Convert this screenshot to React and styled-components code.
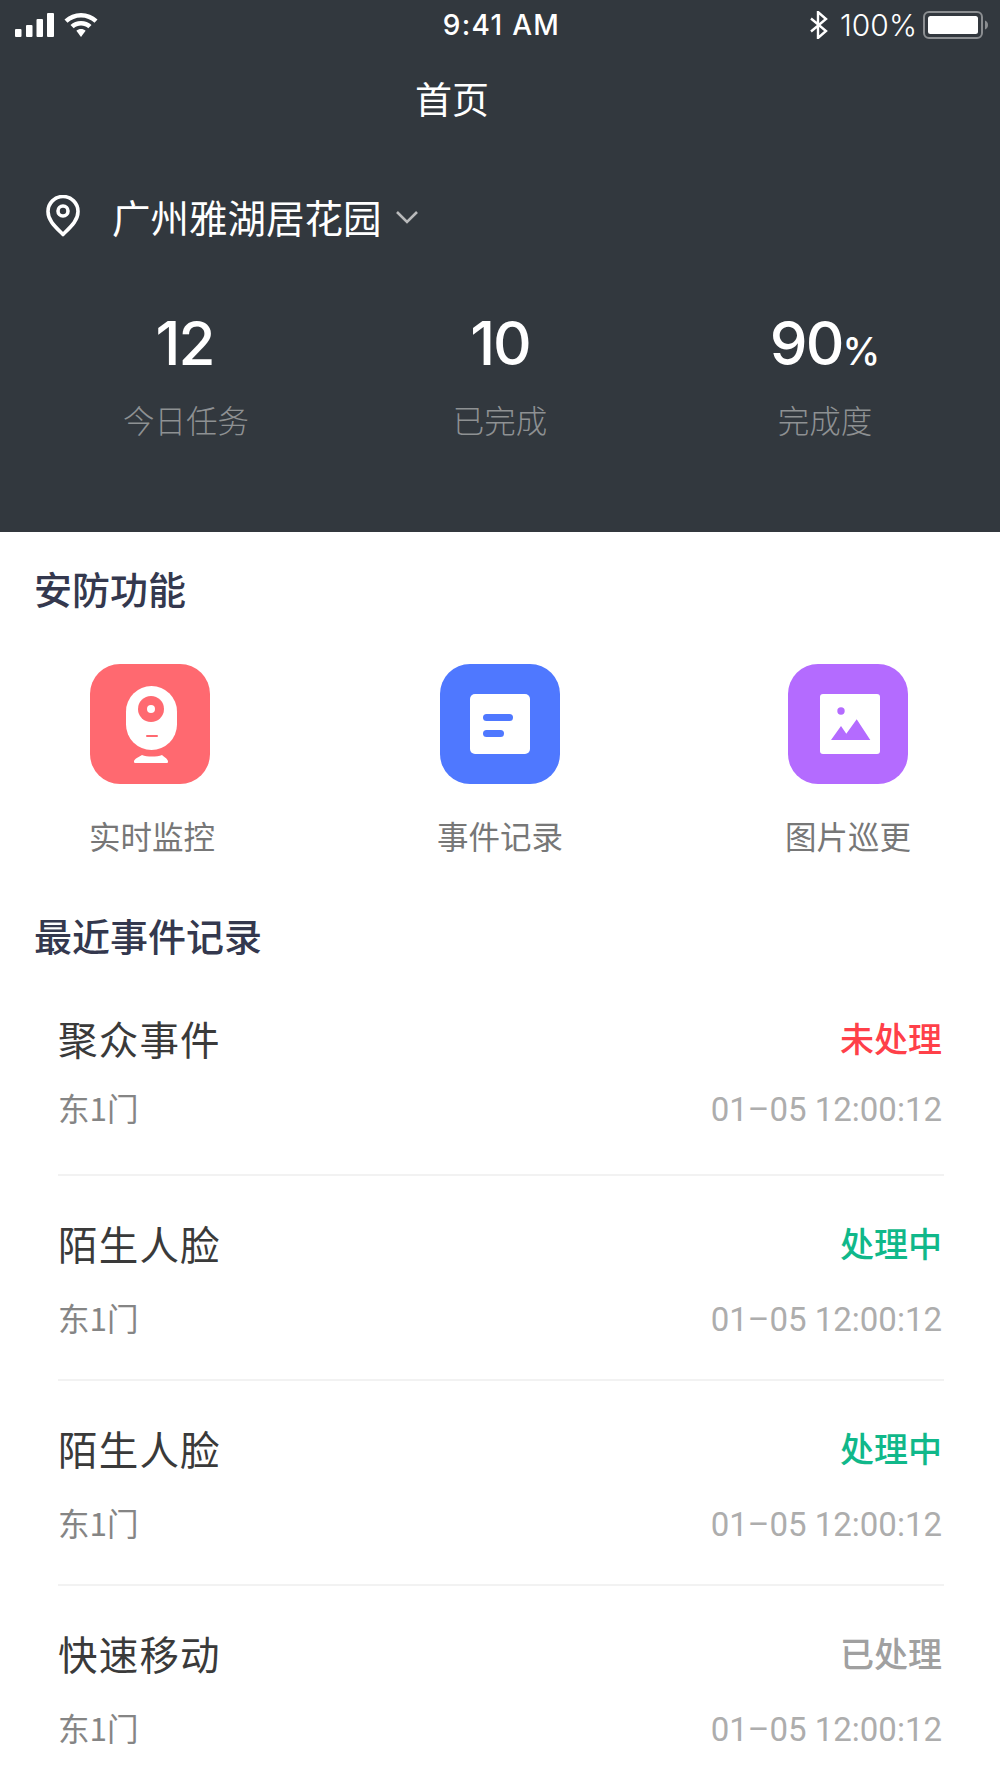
import React from "react";
import styled, { createGlobalStyle } from "styled-components";

const Global = createGlobalStyle`
  html, body { margin: 0; padding: 0; background: #fff; }
  * { box-sizing: border-box; }
  body { font-family: "Noto Sans CJK SC", "Noto Sans", sans-serif; }
`;
const Page = styled.div`width: 1000px; height: 1778px; overflow: hidden; background: #fff;`;
const Header = styled.header`height: 532px; background: #32383e; color: #fff; overflow: hidden;`;
const StatusBar = styled.div`height: 50px; display: grid; grid-template-columns: 1fr auto 1fr; align-items: center; padding: 0 9px 0 15px;`;
const StatusLeft = styled.div`display: flex; align-items: center; gap: 10px;`;
const StatusRight = styled.div`display: flex; align-items: center; justify-content: flex-end; gap: 12px;`;
const Time = styled.div`font: 500 28px/50px Inter, sans-serif; letter-spacing: 1.3px; margin-left: -3px;`;
const Percent = styled.div`font: 300 30px/50px Inter, sans-serif; margin-right: -6px;`;
const NavTitle = styled.h1`margin: 23px 0 0; padding-right: 96px; height: 50px; text-align: center; font-weight: 400; font-size: 37px; line-height: 50px;`;
const Location = styled.div`display: flex; align-items: center; height: 50px; margin-top: 68px; padding-left: 45px;`;
const LocationName = styled.div`margin-left: 31px; font-size: 38.5px; line-height: 50px; font-weight: 400;`;
const Chevron = styled.svg`margin-left: 13px; margin-top: 2px;`;
const Stats = styled.div`display: grid; grid-template-columns: 328px 300px 350px; padding-left: 22px; margin-top: 66px;`;
const Stat = styled.div`display: flex; flex-direction: column; align-items: center;`;
const StatValue = styled.div`font: 500 60px/72px Inter, Roboto, sans-serif; letter-spacing: -2px; height: 72px; margin-right: ${p => p.$shift || 0}px;`;
const StatUnit = styled.span`font-size: 38px; letter-spacing: 0;`;
const StatLabel = styled.div`margin-top: 18px; font-size: 31.5px; line-height: 44px; font-weight: 300; color: #8e9193;`;
const SectionTitle = styled.h2`margin: ${p => p.$top}px 0 0 34px; height: 50px; font-size: 38px; line-height: 50px; font-weight: 500; color: #34384e;`;
const Functions = styled.div`display: grid; grid-template-columns: 300px 400px 296px; margin-top: 51px;`;
const FnItem = styled.div`display: flex; flex-direction: column; align-items: center;`;
const FnIcon = styled.svg`display: block; width: 120px; height: 120px;`;
const FnLabel = styled.div`margin-top: 29px; margin-left: ${p => p.$shift || 0}px; font-size: 31.5px; line-height: 44px; font-weight: 400; color: #777;`;
const EventList = styled.div`margin: 26px 56px 0 58px;`;
const EventRow = styled.div`height: ${p => p.$h}px; padding-top: ${p => p.$pt}px; border-bottom: ${p => p.$last ? "none" : "2px solid #f2f2f2"};`;
const RowLine = styled.div`display: flex; justify-content: space-between; align-items: center; padding-right: 2px; margin-top: ${p => p.$top || 0}px;`;
const EventName = styled.div`font-size: 39.5px; line-height: 56px; font-weight: 400; color: #3a3a3a; letter-spacing: 1.2px;`;
const EventStatus = styled.div`font-size: 34px; line-height: 56px; font-weight: 500; color: ${p => p.$c};`;
const Place = styled.div`font: 400 31.5px/44px "Noto Sans CJK SC", sans-serif; color: #858585;`;
const Stamp = styled.div`font: 400 33px/44px Roboto, sans-serif; color: #adadad; padding-top: 6px;`;

const events = [
  { name: "聚众事件", status: "未处理", c: "#ff4049", h: 190, pt: 24, gap: 16 },
  { name: "陌生人脸", status: "处理中", c: "#10b88a", h: 205, pt: 39, gap: 21 },
  { name: "陌生人脸", status: "处理中", c: "#10b88a", h: 205, pt: 39, gap: 21 },
  { name: "快速移动", status: "已处理", c: "#a0a0a0", h: 205, pt: 39, gap: 21, last: true },
];

export default function App() {
  return (
    <Page>
      <Global />
      <Header>
        <StatusBar>
          <StatusLeft>
            <svg width="39" height="24" viewBox="0 0 39 24" fill="#fff">
              <rect x="0" y="16" width="6.5" height="8" rx="1" /><rect x="11" y="12" width="6.5" height="12" rx="1" />
              <rect x="21.5" y="6" width="6.5" height="18" rx="1" /><rect x="32" y="0" width="7" height="24" rx="1" />
            </svg>
            <svg width="34" height="24" viewBox="0 0 34 24" fill="#fff">
              <path d="M17 0C10.5 0 5 2.3 0.5 6.5L3.5 9.8C7.2 6.4 11.8 4.4 17 4.4S26.8 6.4 30.500 9.8L33.500 6.500C29 2.300 23.500 0 17 0Z" />
              <path d="M17 8C12.800 8 9.300 9.500 6.500 12L9.700 15.300C11.700 13.600 14.200 12.600 17 12.600S22.300 13.600 24.300 15.300L27.500 12C24.700 9.500 21.200 8 17 8Z" />
              <path d="M17 16C15.200 16 13.600 16.600 12.400 17.700L17 24L21.600 17.700C20.400 16.600 18.800 16 17 16Z" />
            </svg>
          </StatusLeft>
          <Time>9:41 AM</Time>
          <StatusRight>
            <svg width="18" height="28" viewBox="0 0 18 28" fill="none" stroke="#fff" strokeWidth="2.400">
              <path d="M1 7.500L16 20L8 27V1L16 8L1 20.500" />
            </svg>
            <Percent>100%</Percent>
            <svg width="68" height="28" viewBox="0 0 68 28">
              <rect x="1" y="1" width="58" height="26" rx="5" fill="none" stroke="#8b8e91" strokeWidth="2" />
              <rect x="5" y="5" width="50" height="18" rx="2.500" fill="#fff" />
              <path d="M62 9.500C64 10 65 12 65 14S64 18 62 18.500Z" fill="#8b8e91" />
            </svg>
          </StatusRight>
        </StatusBar>
        <NavTitle>首页</NavTitle>
        <Location>
          <svg width="36" height="42" viewBox="0 0 36 42" fill="none" stroke="#fff" strokeWidth="3.600">
            <path d="M18 39.500C10 31.500 3 25.500 3 16.500A15 15 0 0 1 33 16.500C33 25.500 26 31.500 18 39.500Z" strokeLinejoin="round" />
            <circle cx="18" cy="16" r="5" />
          </svg>
          <LocationName>广州雅湖居花园</LocationName>
          <Chevron width="24" height="15" viewBox="0 0 24 15" fill="none" stroke="#b9babb" strokeWidth="2.600"><path d="M2 2L12 12L22 2" /></Chevron>
        </Location>
        <Stats>
          <Stat><StatValue $shift={3}>12</StatValue><StatLabel>今日任务</StatLabel></Stat>
          <Stat><StatValue>10</StatValue><StatLabel>已完成</StatLabel></Stat>
          <Stat><StatValue>90<StatUnit>%</StatUnit></StatValue><StatLabel>完成度</StatLabel></Stat>
        </Stats>
      </Header>
      <SectionTitle $top={31}>安防功能</SectionTitle>
      <Functions>
        <FnItem>
          <FnIcon viewBox="0 0 120 120">
            <rect width="120" height="120" rx="30" fill="#ff6970" />
            <rect x="36" y="22" width="51" height="64" rx="25.500" fill="#fff" />
            <circle cx="61" cy="45" r="13" fill="#ff6970" /><circle cx="61" cy="45" r="4" fill="#fff" />
            <rect x="56" y="71" width="12" height="2" rx="1" fill="#ff6970" />
            <path d="M52 91C57 93 67 93 72 91C74 93 78 95 78 97.500C78 98.500 77.500 99 76.500 99H45.500C44.500 99 44 98.500 44 97.500C44 95 49 93 52 91Z" fill="#fff" />
          </FnIcon>
          <FnLabel $shift={4}>实时监控</FnLabel>
        </FnItem>
        <FnItem>
          <FnIcon viewBox="0 0 120 120">
            <rect width="120" height="120" rx="30" fill="#4f78ff" />
            <rect x="30" y="30" width="60" height="60" rx="5" fill="#fff" />
            <rect x="43" y="50" width="30" height="7" rx="3.500" fill="#4f78ff" />
            <rect x="43" y="66" width="21" height="7" rx="3.500" fill="#4f78ff" />
          </FnIcon>
          <FnLabel>事件记录</FnLabel>
        </FnItem>
        <FnItem>
          <FnIcon viewBox="0 0 120 120">
            <rect width="120" height="120" rx="30" fill="#b46bff" />
            <rect x="32" y="30" width="60" height="60" rx="3" fill="#fff" />
            <circle cx="53" cy="47" r="3.700" fill="#b46bff" />
            <path d="M43 76L53 62L58.300 69.700L68.700 55.300L82.300 76Z" fill="#b46bff" />
          </FnIcon>
          <FnLabel>图片巡更</FnLabel>
        </FnItem>
      </Functions>
      <SectionTitle $top={53}>最近事件记录</SectionTitle>
      <EventList>
        {events.map((e, i) => (
          <EventRow key={i} $h={e.h} $pt={e.pt} $last={e.last}>
            <RowLine>
              <EventName>{e.name}</EventName>
              <EventStatus $c={e.c}>{e.status}</EventStatus>
            </RowLine>
            <RowLine $top={e.gap}>
              <Place>东1门</Place>
              <Stamp>01–05 12:00:12</Stamp>
            </RowLine>
          </EventRow>
        ))}
      </EventList>
    </Page>
  );
}
